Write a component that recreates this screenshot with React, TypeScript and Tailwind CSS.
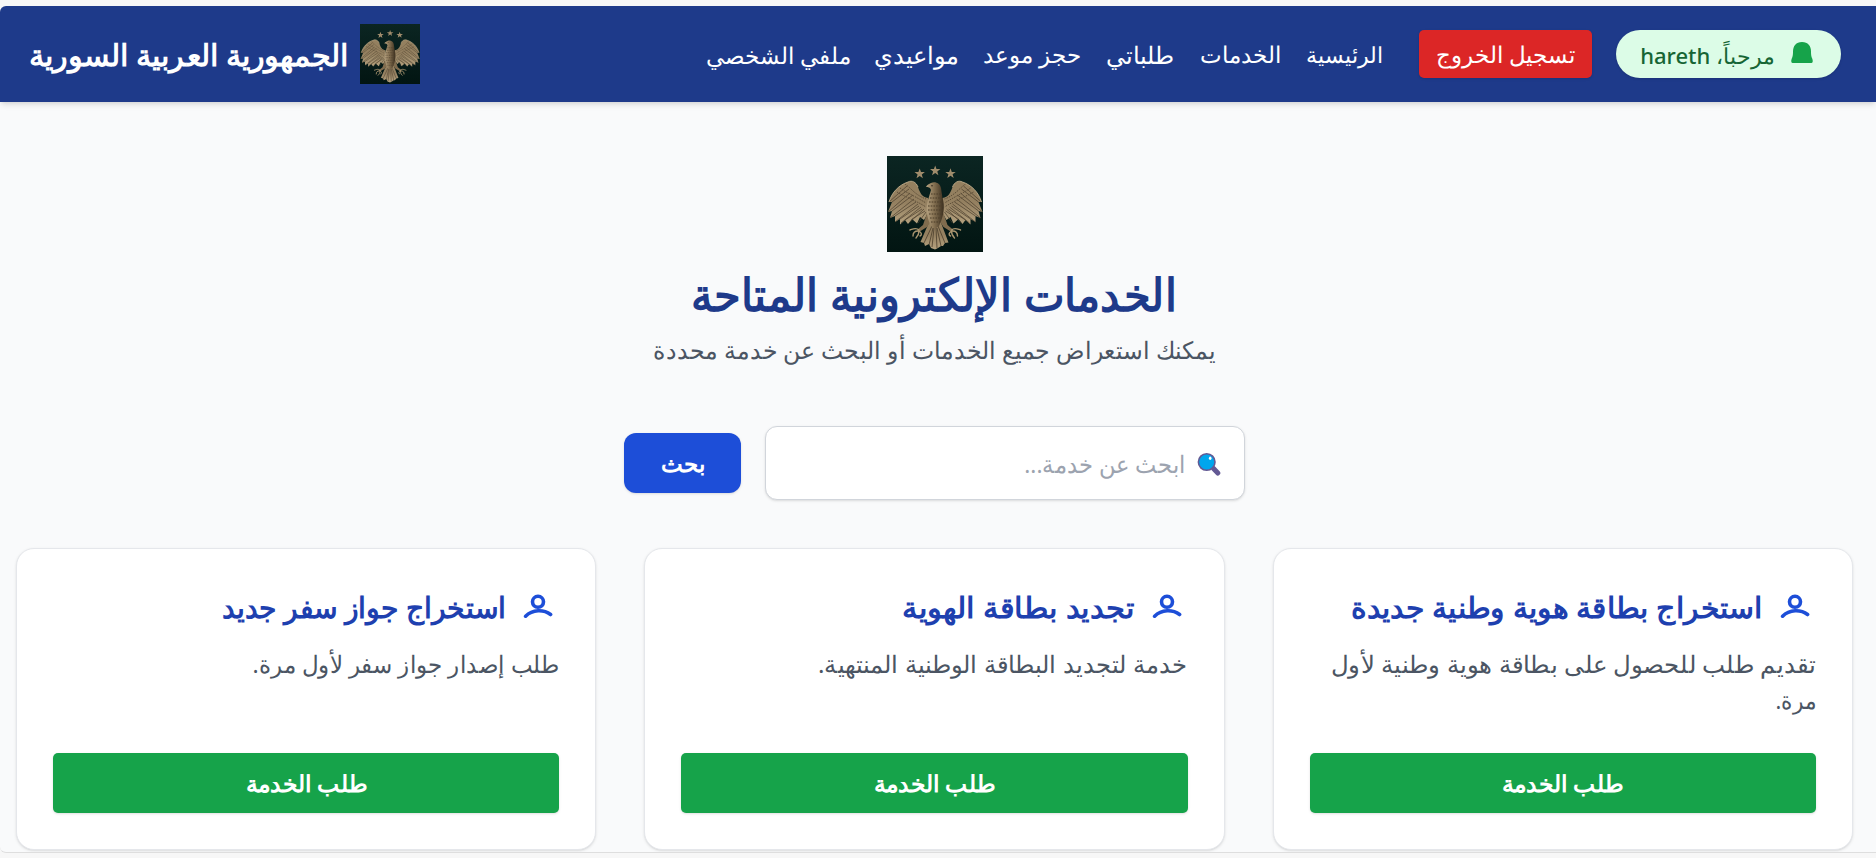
import React from "react";

const STAR = "M0,-5.4 L1.3,-1.7 L5.2,-1.7 L2.1,0.6 L3.2,4.4 L0,2.1 L-3.2,4.4 L-2.1,0.6 L-5.2,-1.7 L-1.3,-1.7 Z";

function Wing() {
  return (
    <g>
      <path
        d="M41,42 C35,41 33,37 31,31 C29,26 25,24 21,26 C12,29 5,36 2,46 L5,46 L1,56 L5,55 L3,62 L8,60 L8,66 L13,63 L13,68.5 L18,64 L21,68 L25,63 L30,67.5 L33,61 L37,64 L41,57 Z"
        fill="url(#feather)"
      />
      <path
        d="M20,30 L2,46 M22,33 L5,46 M23,37 L1,56 M26,39 L5,55 M27,43 L3,62 M29,46 L8,60 M31,48 L8,66 M32,50 L13,63 M34,51 L14,67 M35,53 L18,64 M37,53 L22,67 M38,55 L25,63 M39,56 L31,67"
        stroke="#4a3d2c"
        strokeWidth="0.7"
        fill="none"
      />
      <path
        d="M13,32 C18,36 24,38 39,47 M10,36 C18,41 26,43 39,51 M18,28 C24,32 28,39 39,43"
        stroke="#5d4e38"
        strokeWidth="1"
        strokeDasharray="1.5 1"
        fill="none"
      />
      <path d="M2,46 C5,36 12,29 21,26 C25,24 29,26 31,31" stroke="#c9b592" strokeWidth="0.8" fill="none" />
    </g>
  );
}

function Leg() {
  return (
    <g>
      <path d="M40,57 L46,62 L40,71 L32,76 L30,74 L36,69 Z" fill="#806c4e" />
      <path
        d="M32,74 C29,71 26,73 23,74 M31,75 C27,75 26,77 26,80 M32,75 C32,79 30,81 29,82 M32,75 C35,77 35,79 33,80"
        stroke="#a8946f"
        strokeWidth="1.4"
        strokeLinecap="round"
        fill="none"
      />
    </g>
  );
}

function Emblem({ className }: { className: string }) {
  return (
    <svg viewBox="0 0 96 96" className={className} aria-hidden="true">
      <defs>
        <linearGradient id="ground" x1="0" y1="0" x2="0" y2="1">
          <stop offset="0" stopColor="#0b2522" />
          <stop offset="1" stopColor="#021512" />
        </linearGradient>
        <linearGradient id="feather" x1="0" y1="0" x2="0" y2="1">
          <stop offset="0" stopColor="#94805f" />
          <stop offset="0.5" stopColor="#948060" />
          <stop offset="1" stopColor="#b5a27f" />
        </linearGradient>
        <linearGradient id="torso" x1="0" y1="0" x2="1" y2="0">
          <stop offset="0" stopColor="#b8a482" />
          <stop offset="0.45" stopColor="#857152" />
          <stop offset="1" stopColor="#3a2e1e" />
        </linearGradient>
      </defs>
      <rect width="96" height="96" fill="url(#ground)" />
      <path d={STAR} transform="translate(32.7 17.8)" fill="#a08c6c" />
      <path d={STAR} transform="translate(48.2 14.8)" fill="#a08c6c" />
      <path d={STAR} transform="translate(63.5 17.6)" fill="#a08c6c" />
      <Wing />
      <g transform="translate(96.5 0) scale(-1 1)">
        <Wing />
      </g>
      <path
        d="M43,64 L33.5,86 L37,87 L38,90 L42,88 L44,92 L48,93.5 L51,92 L54,90 L56,90 L58,87 L61.5,86.5 L53,64 Z"
        fill="url(#feather)"
      />
      <path
        d="M45,70 L37,87 M46,72 L42,89 M47,72 L45,91 M49,72 L50,92 M50,72 L54,90 M51,70 L58,87"
        stroke="#4a3d2c"
        strokeWidth="0.8"
        fill="none"
      />
      <Leg />
      <g transform="translate(96.5 0) scale(-1 1)">
        <Leg />
      </g>
      <path
        d="M39,31 C40,28.5 42,28 44,27 C48,25 53,27 54,32 L55.5,42 C58,50 57,60 52,70 L48,73 L44,70 C39,60 39,51 41,44 L44,34 C43,31 41,31 39,31 Z"
        fill="url(#torso)"
      />
      <path
        d="M44,38 L54,38 M43,42 L55,42 M42,46 L56,46 M41,50 L56,50 M41,54 L56,54 M42,58 L55,58 M43,62 L54,62 M44,66 L53,66"
        stroke="#4b3d29"
        strokeWidth="1"
        strokeDasharray="1.6 1.1"
        fill="none"
      />
      <circle cx="45" cy="29.7" r="0.7" fill="#1d1710" />
    </svg>
  );
}

function BellIcon() {
  return (
    <svg viewBox="0 0 22 22" className="mb-0.5 h-[22px] w-[22px]" aria-hidden="true">
      <path
        d="M11,0 C5,0 2,4 2,9.5 C2,13.5 1.6,14.5 0.8,16.5 C0.3,17.8 0.2,18.6 0.3,19.5 C0.3,20.6 1.2,21 2.4,21 H19.6 C20.8,21 21.7,20.6 21.7,19.5 C21.8,18.6 21.7,17.8 21.2,16.5 C20.4,14.5 20,13.5 20,9.5 C20,4 17,0 11,0 Z"
        fill="#16a34a"
      />
    </svg>
  );
}

function PersonIcon() {
  return (
    <svg viewBox="0 0 30 28" className="h-7 w-[30px]" fill="none" stroke="#1d4ed8" strokeWidth="3.6" strokeLinecap="round" aria-hidden="true">
      <circle cx="15" cy="7.8" r="5.5" />
      <path d="M2.6,22.2 C9.6,15.3 20.6,15.3 27.6,20.5" />
    </svg>
  );
}

function SearchEmoji() {
  return (
    <svg viewBox="0 0 24 26" className="h-[26px] w-6" aria-hidden="true">
      <path d="M16.5,18.5 L20.8,23" stroke="#635994" strokeWidth="5" strokeLinecap="round" />
      <circle cx="9.7" cy="12" r="8.3" fill="#00a6ed" stroke="#635994" strokeWidth="1.6" />
      <ellipse cx="13.2" cy="8.3" rx="1.3" ry="1.7" fill="#fff" />
    </svg>
  );
}

const NAV = [
  { label: "الرئيسية", cls: "w-[78px] text-[22.3px]" },
  { label: "الخدمات", cls: "w-[83px] text-[22.9px]" },
  { label: "طلباتي", cls: "w-[69px] text-[24px]" },
  { label: "حجز موعد", cls: "w-[98px] text-[22.9px]" },
  { label: "مواعيدي", cls: "w-[84px] text-[23.6px]" },
  { label: "ملفي الشخصي", cls: "w-[147px] text-[23.4px]" },
];

const SERVICES = [
  {
    title: "استخراج بطاقة هوية وطنية جديدة",
    titleCls: "scale-x-[1.027]",
    text: [
      { line: "تقديم طلب للحصول على بطاقة هوية وطنية لأول", cls: "scale-x-[1.018]" },
      { line: "مرة.", cls: "scale-x-[0.9]" },
    ],
  },
  {
    title: "تجديد بطاقة الهوية",
    titleCls: "scale-x-[1.054]",
    text: [{ line: "خدمة لتجديد البطاقة الوطنية المنتهية.", cls: "scale-x-[1.011]" }],
  },
  {
    title: "استخراج جواز سفر جديد",
    titleCls: "scale-x-[0.971]",
    text: [{ line: "طلب إصدار جواز سفر لأول مرة.", cls: "scale-x-[0.957]" }],
  },
];

export default function App() {
  return (
    <div dir="rtl" className="flex h-[858px] w-[1876px] flex-col overflow-hidden bg-[#f7f7f7] pt-1.5 font-['Noto_Sans',sans-serif]">
      <div className="flex h-[847px] flex-col overflow-hidden rounded-l-[6px] border-b border-[#dedede] bg-[#f9fafb]">
        <header className="flex h-24 shrink-0 items-center bg-[#1e3a8a] pr-[35px] pl-[28px] text-white shadow-md">
          <div className="flex h-12 w-[225px] items-center gap-4 rounded-full bg-[#dcfce7] pr-[28px] text-[#166534] shadow-sm">
            <BellIcon />
            <span className="pt-0.5 whitespace-nowrap text-[22px] font-medium">مرحباً، hareth</span>
          </div>
          <button className="mr-6 h-12 w-[173px] rounded-[5px] bg-[#dc2626] pt-0.5 text-[22.6px] whitespace-nowrap shadow-sm">تسجيل الخروج</button>
          <nav className="mr-9 flex items-center gap-6 pt-0.5 leading-9 whitespace-nowrap">
            {NAV.map((n) => (
              <a key={n.label} className={n.cls}>{n.label}</a>
            ))}
          </nav>
          <div className="mr-auto flex items-center gap-3">
            <Emblem className="h-[60px] w-[60px]" />
            <span className="w-[320px] origin-right scale-x-[1.01] pt-0.5 text-[30.1px] font-bold whitespace-nowrap">الجمهورية العربية السورية</span>
          </div>
        </header>
        <main className="flex flex-col items-center pr-[23px] pl-4">
          <Emblem className="mt-[54px] h-24 w-24" />
          <h1 className="mt-3 h-[60px] scale-x-[0.96] text-[45px] leading-[60px] font-bold whitespace-nowrap text-[#1e3a8a]">الخدمات الإلكترونية المتاحة</h1>
          <p className="mt-2 h-9 scale-x-[0.981] text-[24px] leading-9 whitespace-nowrap text-[#4b5563]">يمكنك استعراض جميع الخدمات أو البحث عن خدمة محددة</p>
          <div className="mt-[58px] flex items-center gap-6">
            <div className="flex h-[74px] w-[480px] items-center gap-[11px] rounded-xl border border-[#d1d5db] bg-white pr-[23px] text-[24px] text-[#9ca3af] shadow-sm">
              <SearchEmoji />
              <span className="origin-right scale-x-[0.94] pt-0.5 whitespace-nowrap">ابحث عن خدمة...</span>
            </div>
            <button className="h-[60px] w-[117px] rounded-xl bg-[#1d4ed8] text-[23px] font-semibold text-white shadow-sm">بحث</button>
          </div>
          <div className="mt-12 grid w-full grid-cols-3 gap-12">
            {SERVICES.map((s) => (
              <article key={s.title} className="flex h-[302px] flex-col rounded-[18px] border border-[#e5e7eb] bg-white px-9 pt-[35px] pb-[36px] shadow-sm">
                <div className="flex h-12 items-center gap-[18px] pr-[6px]">
                  <PersonIcon />
                  <h2 className={`origin-right pb-0.5 text-[29px] font-semibold whitespace-nowrap text-[#1e40af] ${s.titleCls}`}>{s.title}</h2>
                </div>
                <div className="mt-3.5 text-[24px] leading-9 text-[#4b5563]">
                  {s.text.map((t) => (
                    <p key={t.line} className={`origin-right whitespace-nowrap ${t.cls}`}>{t.line}</p>
                  ))}
                </div>
                <button className="mt-auto h-[60px] shrink-0 rounded-[5px] bg-[#16a34a] pt-0.5 text-[23.4px] font-semibold text-white shadow-sm">
                  <span className="inline-block scale-x-[1.02]">طلب الخدمة</span>
                </button>
              </article>
            ))}
          </div>
        </main>
      </div>
    </div>
  );
}
